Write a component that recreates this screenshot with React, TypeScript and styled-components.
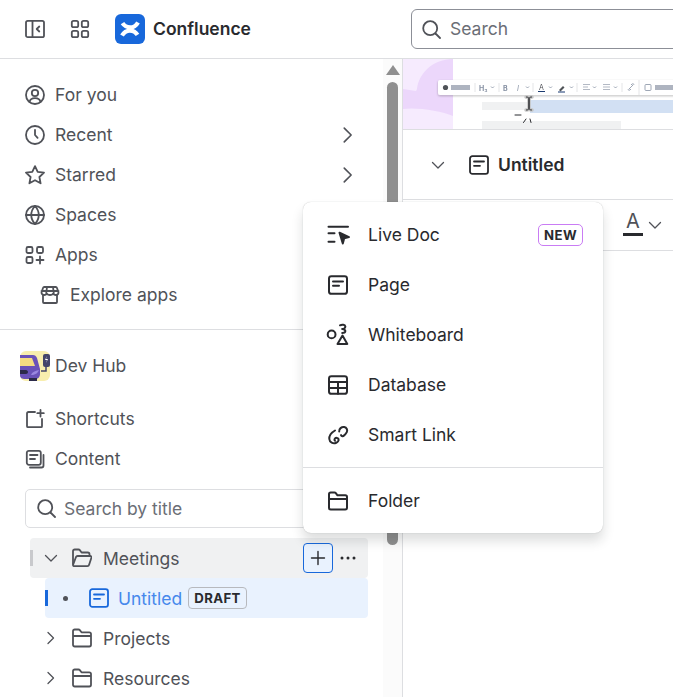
import React from 'react';
import styled, { createGlobalStyle } from 'styled-components';

const GlobalStyle = createGlobalStyle`
  html, body {
    margin: 0;
    padding: 0;
    background: #fff;
    font-family: Inter, "Liberation Sans", sans-serif;
  }
`

const Page = styled.div`
  position: relative;
  width: 673px;
  height: 697px;
  overflow: hidden;
  background: #fff;
`
const TopBar = styled.header`
  display: flex;
  align-items: center;
  height: 58px;
  border-bottom: 1px solid #dddee1;
  padding-left: 25px;
`
const BarIcon = styled.span`
  display: flex;
  width: 20px;
  height: 20px;
  margin-right: 25px;
  color: #505258;
`
const LogoBox = styled.span`
  display: flex;
  width: 30px;
  height: 30px;
  margin-right: 8px;
`
const Brand = styled.span`
  flex: none;
  padding-bottom: 2px;
  font-size: 17.5px;
  font-weight: 600;
  color: #292a2e;
  width: 258px;
`
const SearchBox = styled.div`
  display: flex;
  flex: none;
  align-items: center;
  gap: 9px;
  width: 320px;
  height: 38px;
  padding-left: 10px;
  border: 1px solid #8c8f97;
  border-radius: 6px;
  color: #505258;
  font-size: 17.5px;
  span { color: #6b6e76; padding-bottom: 2px; }
`
const Body = styled.div`
  display: flex;
  height: 638px;
`
const Sidebar = styled.aside`
  display: flex;
  flex: none;
  width: 402px;
  border-right: 1px solid #dddee1;
`
const NavColumn = styled.nav`
  flex: none;
  width: 383px;
  padding-top: 16px;
`
const ScrollTrack = styled.div`
  display: flex;
  flex-direction: column;
  align-items: center;
  width: 19px;
  padding-top: 6px;
  background: #fbfbfb;
`
const ScrollArrow = styled.div`
  width: 0;
  height: 0;
  border-left: 7px solid transparent;
  border-right: 7px solid transparent;
  border-bottom: 10px solid #8f8f8f;
  margin-bottom: 7px;
`
const ScrollThumb = styled.div`
  width: 11px;
  height: 463px;
  border-radius: 6px;
  background: #8f8f8f;
`
const Label = styled.span`
  padding-bottom: 2px;
`
const NavItem = styled.div<{ $indent?: boolean }>`
  display: flex;
  align-items: center;
  gap: 10px;
  height: 40px;
  padding-left: ${(p) => (p.$indent ? '40px' : '25px')};
  padding-right: 25px;
  color: #505258;
  font-size: 17.5px;
  svg { flex: none; width: 20px; height: 20px; }
`
const NavTail = styled.span`
  display: flex;
  margin-left: auto;
`
const NavDivider = styled.div`
  height: 1px;
  margin-top: 14px;
  background: #dddee1;
`
const SpaceRow = styled.div`
  display: flex;
  align-items: center;
  gap: 5px;
  height: 30px;
  margin: 21px 0 18px;
  padding-left: 20px;
  color: #505258;
  font-size: 17.5px;
`
const SpaceIcon = styled.span`
  display: flex;
  width: 30px;
  height: 30px;
`
const TitleSearch = styled.div`
  display: flex;
  align-items: center;
  gap: 8px;
  box-sizing: border-box;
  height: 39px;
  margin: 10px 0 10px 25px;
  padding-left: 11px;
  border: 1px solid #dddee1;
  border-radius: 5px;
  color: #6b6e76;
  font-size: 17.5px;
  svg { color: #505258; }
`
const TreeRow = styled.div<{ $variant?: 'hover' | 'active'; $inset?: boolean }>`
  position: relative;
  display: flex;
  align-items: center;
  height: 40px;
  margin-left: ${(p) => (p.$inset ? '45px' : '30px')};
  margin-right: 15px;
  padding-right: 7px;
  border-radius: 4px;
  color: ${(p) => (p.$variant === 'active' ? '#4688ec' : '#505258')};
  font-size: 17.5px;
  background: ${(p) =>
    p.$variant === 'active' ? '#e9f2fe' : p.$variant === 'hover' ? '#f0f1f2' : 'transparent'};
`
const EdgeMark = styled.span<{ $color: string }>`
  position: absolute;
  left: 0;
  top: 12px;
  width: 3px;
  height: 16px;
  background: ${(p) => p.$color};
`
const Twist = styled.span`
  display: flex;
  justify-content: center;
  width: 16px;
  margin: 0 13px;
  color: #505258;
`
const TreeIcon = styled.span`
  display: flex;
  width: 20px;
  height: 20px;
  margin-right: 11px;
`
const TreeLabel = styled.span`
  padding-top: 1px;
`
const DraftDot = styled.span`
  flex: none;
  width: 5px;
  height: 5px;
  margin: 0 22px 0 18px;
  border-radius: 50%;
  background: #505258;
`
const PageIcon = styled.span`
  display: flex;
  width: 20px;
  height: 20px;
  margin-right: 9px;
  margin-left: -1px;
  color: #1868db;
`
const DraftBadge = styled.span`
  display: flex;
  align-items: center;
  box-sizing: border-box;
  height: 22px;
  margin-left: 6px;
  padding: 0 5px;
  border: 1px solid #b7b9be;
  border-radius: 4px;
  color: #292a2e;
  font-size: 13.2px;
  font-weight: 700;
  letter-spacing: 0.4px;
`
const RowActions = styled.span`
  display: flex;
  align-items: center;
  gap: 2px;
  margin-left: auto;
`
const PlusButton = styled.span`
  display: flex;
  align-items: center;
  justify-content: center;
  box-sizing: border-box;
  width: 30px;
  height: 30px;
  border: 1px solid #1868db;
  border-radius: 4px;
  background: #e9f2fe;
  color: #292a2e;
`
const MoreButton = styled.span`
  display: flex;
  width: 26px;
  justify-content: center;
  color: #292a2e;
`
const Main = styled.main`
  flex: 1;
  min-width: 0;
`
const Banner = styled.div`
  display: flex;
  height: 70px;
  border-bottom: 1px solid #dddee1;
  svg { display: block; }
`
const TitleRow = styled.div`
  display: flex;
  align-items: center;
  height: 69px;
  padding-left: 27px;
  border-bottom: 1px solid #dddee1;
  color: #292a2e;
  font-size: 17.5px;
  font-weight: 600;
`
const TitleChevron = styled.span`
  display: flex;
  width: 16px;
  margin-right: 23px;
  color: #505258;
`
const TitleIcon = styled.span`
  display: flex;
  width: 20px;
  height: 20px;
  margin-right: 9px;
`
const FormatBar = styled.div`
  display: flex;
  align-items: center;
  height: 50px;
  padding-left: 220px;
  border-bottom: 1px solid #dddee1;
  color: #505258;
`
const ColorLetter = styled.span`
  display: block;
  width: 20px;
  margin-right: 4px;
  margin-top: -3px;
  padding-bottom: 1px;
  border-bottom: 3px solid #292a2e;
  font-size: 20px;
  line-height: 21px;
  text-align: center;
`
const Popup = styled.div`
  position: absolute;
  left: 303px;
  top: 202px;
  width: 300px;
  height: 331px;
  padding-top: 8px;
  box-sizing: border-box;
  border-radius: 8px;
  background: #fff;
  box-shadow: 0 8px 12px rgba(30, 31, 33, 0.15), 0 0 1px rgba(30, 31, 33, 0.31);
`
const MenuItem = styled.div`
  display: flex;
  align-items: center;
  gap: 20px;
  height: 50px;
  padding: 0 20px 0 25px;
  color: #292a2e;
  font-size: 17.5px;
  svg { flex: none; width: 20px; height: 20px; overflow: visible; stroke-width: 2; }
`
const NewBadge = styled.span`
  display: flex;
  align-items: center;
  box-sizing: border-box;
  height: 22px;
  margin-left: auto;
  padding: 0 5px;
  border: 1px solid #c97cf4;
  border-radius: 5px;
  font-size: 13.2px;
  font-weight: 700;
  letter-spacing: 0.4px;
`
const MenuDivider = styled.div`
  height: 1px;
  margin: 7px 0 8px;
  background: #dddee1;
`

const Svg: React.FC<{ children: React.ReactNode; size?: number }> = ({ children, size = 20 }) => (
  <svg width={size} height={size} viewBox="0 0 20 20" fill="none" stroke="currentColor" strokeWidth="1.8" strokeLinecap="round" strokeLinejoin="round">
    {children}
  </svg>
)

const Chevron: React.FC<{ down?: boolean }> = ({ down }) => (
  <svg width="16" height="16" viewBox="0 0 16 16" fill="none" stroke="currentColor" strokeWidth="1.3" strokeLinecap="round" strokeLinejoin="round">
    {down ? <path d="M2.500 5.500 8 11l5.500-5.500" /> : <path d="M5 2.500 10.500 8 5 13.500" />}
  </svg>
)

const SearchGlyph = () => (
  <svg width="19" height="19" viewBox="0 0 19 19" fill="none" stroke="currentColor" strokeWidth="1.800" strokeLinecap="round">
    <circle cx="8.200" cy="8.200" r="7" />
    <path d="m13.500 13.500 4.500 4.500" />
  </svg>
)

const PageGlyph = () => (
  <Svg>
    <rect x="1" y="1.200" width="18" height="17.600" rx="2.400" />
    <path d="M5 6.500h10M5 10.800h6" />
  </Svg>
)

const FolderGlyph = () => (
  <Svg>
    <path d="M1 5V3.200c0-1 .7-1.700 1.700-1.700h3.800c.5 0 1 .2 1.300.6L9.500 4.300h7.800c1 0 1.700.7 1.700 1.700v10.800c0 1-.7 1.700-1.700 1.700H2.700c-1 0-1.700-.7-1.700-1.700V5ZM1 8h18" />
  </Svg>
)

const navIcons: Record<string, React.ReactNode> = {
  foryou: (
    <Svg>
      <circle cx="10" cy="10" r="9" />
      <circle cx="10" cy="8" r="3.200" />
      <path d="M4.500 17c.5-2.600 2.200-3.800 5.500-3.800s5 1.200 5.500 3.800" />
    </Svg>
  ),
  recent: (
    <Svg>
      <circle cx="10" cy="10" r="9" />
      <path d="M10 4.800V10l2.600 2.800" />
    </Svg>
  ),
  starred: (
    <Svg>
      <path d="m10 1.100 2.700 5.800 6.300.8-4.600 4.300 1.200 6.300L10 15.200 4.400 18.300l1.200-6.300L1 7.700l6.300-.8L10 1.100Z" />
    </Svg>
  ),
  spaces: (
    <Svg>
      <circle cx="10" cy="10" r="9" />
      <path d="M1 10h18M10 1c-5 5.500-5 12.500 0 18M10 1c5 5.500 5 12.500 0 18" />
    </Svg>
  ),
  apps: (
    <Svg>
      <rect x="1.500" y="2" width="6" height="6" rx="1.500" />
      <rect x="12" y="2" width="6" height="6" rx="1.500" />
      <rect x="1.500" y="12" width="6" height="6" rx="1.500" />
      <path d="M15 11.500v7M11.500 15h7" />
    </Svg>
  ),
  explore: (
    <Svg>
      <path d="M3 10v7c0 .6.400 1 1 1h12c.6 0 1-.4 1-1v-7" />
      <path d="M1.500 7.500 3 3c.2-.6.600-1 1.200-1h11.600c.6 0 1 .4 1.200 1l1.500 4.500c0 1.500-1.200 2.500-2.800 2.500-1.100 0-2-.5-2.700-1.300-.5.800-1.600 1.300-3 1.300s-2.500-.5-3-1.300C6.300 9.500 5.400 10 4.300 10 2.700 10 1.500 9 1.500 7.500ZM7 2l-.8 6.700M13 2l.8 6.700M1.500 6h17" />
    </Svg>
  ),
  shortcuts: (
    <Svg>
      <path d="M10 3H3.500C2.500 3 2 3.600 2 4.500v12.700c0 .6.400 1 1 1h13.200c.5 0 .8-.4.800-1V10" />
      <path d="M15.500 1v6.500M12.300 4.200h6.500" />
    </Svg>
  ),
  content: (
    <Svg>
      <rect x="1.800" y="1.800" width="14" height="14" rx="2" />
      <path d="M5 6h7.500M5 10h5M18.500 6v10.500c0 1-.8 2-2 2H5" />
    </Svg>
  ),
}

const menuIcons: Record<string, React.ReactNode> = {
  live: (
    <Svg>
      <path d="M.5 1.800h19.500M.5 8.300h6M.5 16.700h6" />
      <path d="m11.500 7.700 9.500 4.400-4.800 1.200-1.400 5.200-3.300-10.800Z" fill="currentColor" />
    </Svg>
  ),
  whiteboard: (
    <Svg>
      <circle cx="3.600" cy="9.400" r="3.900" />
      <path d="M12 .3c2-1 5-.7 5.300 1 .3 1.500-1.200 2.500-3.100 2.800 2 .2 3.500 1 3.100 2.500-.3 1.100-1.600 1.500-3.100 1.500" />
      <path d="m14.500 10.600 4.800 8.400H9.500l5-8.400Z" />
    </Svg>
  ),
  database: (
    <Svg>
      <rect x="1" y="1.200" width="18" height="17.600" rx="2.400" />
      <path d="M1 7h18M1 13h18M10 7v11.800" />
    </Svg>
  ),
  link: (
    <Svg>
      <path d="M11.200 6.500c-.5-2.500 2.500-5 5-4.500 2.500.5 3.600 3 2.600 5.100-.7 1.500-2 2.800-3.500 4-1 .3-2-.2-2.300-1" />
      <path d="M7 5.500C3.500 7.500 1 10.500 1.300 14c.3 3.500 4 5 6.500 4 2-.8 3.300-2.500 2.700-4-.6-1.300-2.500-1.500-3.500-.5-.7.700-.7 1.800 0 2.300" />
    </Svg>
  ),
}

const BannerArt = () => (
  <svg width="270" height="70" viewBox="0 0 270 70" fontFamily="Inter, sans-serif">
    <defs>
      <filter id="barShadow" x="-5%" y="-30%" width="110%" height="170%">
        <feDropShadow dx="0" dy="1" stdDeviation="1.200" floodColor="#1e1f21" floodOpacity="0.28" />
      </filter>
      <filter id="blurAll" x="-5%" y="-5%" width="110%" height="110%">
        <feGaussianBlur stdDeviation="0.300" />
      </filter>
    </defs>
    <rect x="0" y="0" width="50" height="70" fill="#f6ebfe" />
    <path d="M0 30 14 30C16 14 30 0 50 0V57C38 52 14 48 0 50Z" fill="#ecd7fb" />
    <path d="M0 30 14 30 13 32 0 30Z" fill="#f6ebfe" />
    <path d="M46 70C47 64 49 60 50 58V70Z" fill="#f6ebfe" />
    <rect x="79" y="43" width="63" height="8" fill="#f0f1f2" />
    <rect x="127" y="41" width="143" height="13" fill="#d2e0f3" />
    <rect x="79" y="62" width="139" height="8" fill="#f0f1f2" />
    <g filter="url(#barShadow)">
      <rect x="35" y="21" width="240" height="15" rx="2" fill="#fff" />
    </g>
    <g filter="url(#blurAll)">
      <circle cx="42.500" cy="28.500" r="2.600" fill="#505258" />
      <rect x="48" y="26" width="19" height="5" fill="#aeb4c0" />
      <rect x="252" y="26" width="18" height="5" fill="#aeb4c0" />
      <g fill="#8590a2" fontSize="7" fontWeight="700">
        <text x="76" y="31.500">H₃</text>
        <text x="100" y="31.500">B</text>
        <text x="114" y="31.500" fontStyle="italic" fontWeight="400">I</text>
      </g>
      <text x="136" y="31" fontSize="7" fill="#505258">A</text>
      <rect x="135" y="32" width="7" height="1" fill="#1d3a70" />
      <path d="m156 31 4-4 1.500 1.500-4 4Z" fill="#505258" />
      <rect x="155" y="32.500" width="7" height="1" fill="#1d3a70" />
      <g stroke="#b3b9c4" strokeWidth="1">
        <path d="M180 25.500h7M180 28h5M180 30.500h7M200 25.500h7M200 28h7M200 30.500h7" />
      </g>
      <g fill="none" stroke="#8590a2" strokeWidth="0.800">
        <path d="m88 27.500 1.500 1.500 1.500-1.500M123 27.500l1.500 1.500 1.500-1.500M146 27.500l1.500 1.500 1.500-1.500M167 27.500l1.500 1.500 1.500-1.500M190 27.500l1.500 1.500 1.500-1.500M211 27.500l1.500 1.500 1.500-1.500" />
        <path d="m226 30 4-4M225 30c0 1 1 1.500 2 1l1-1M231 26c0-1-1-1.500-2-1l-1 1" />
        <rect x="242" y="25.500" width="6" height="6" rx="1" />
      </g>
      <g stroke="#dddee1" strokeWidth="0.800">
        <path d="M72 24v9M96 24v9M130 24v9M174 24v9M219 24v9M236 21v15" />
      </g>
    </g>
    <g fill="none" strokeLinecap="round">
      <path d="M123 38c2 0 3 1 3 2v9c0 1-1 2-3 2M129 38c-2 0-3 1-3 2v9c0 1 1 2 3 2" stroke="#c4c4c4" strokeWidth="3.500" />
      <path d="M123.500 38c2 0 2.500 1 2.500 2v9c0 1-.5 2-2.500 2M128.500 38c-2 0-2.500 1-2.500 2v9c0 1 .5 2 2.500 2" stroke="#292a2e" strokeWidth="1" />
      <path d="M112 56h6M123 60l-2.500 3.500M127 60l1 3.500" stroke="#292a2e" strokeWidth="1" />
    </g>
  </svg>
)

const navItems = [
  { key: 'foryou', label: 'For you' },
  { key: 'recent', label: 'Recent', arrow: true },
  { key: 'starred', label: 'Starred', arrow: true },
  { key: 'spaces', label: 'Spaces' },
  { key: 'apps', label: 'Apps' },
]

const App: React.FC = () => {
  return (
    <Page>
      <GlobalStyle />
      <TopBar>
        <BarIcon>
          <Svg>
            <rect x="1" y="1.800" width="18" height="16.400" rx="1.800" />
            <path d="M7.500 2v16" />
            <path d="m14.300 7.500-2.600 2.500 2.600 2.500" />
          </Svg>
        </BarIcon>
        <BarIcon>
          <Svg>
            <rect x="1.800" y="1.800" width="6.400" height="6.400" rx="1.800" />
            <rect x="11.800" y="1.800" width="6.400" height="6.400" rx="1.800" />
            <rect x="1.800" y="11.800" width="6.400" height="6.400" rx="1.800" />
            <rect x="11.800" y="11.800" width="6.400" height="6.400" rx="1.800" />
          </Svg>
        </BarIcon>
        <LogoBox>
          <svg width="30" height="30" viewBox="0 0 30 30">
            <rect width="30" height="30" rx="6" fill="#1868db" />
            <g fill="none" stroke="#fff" strokeWidth="4.200">
              <path d="M7.500 9.200C11 14.500 19 15.500 23 8.500" />
              <path d="M7 21.500C11 14.500 19 15.500 22.500 20.800" />
            </g>
          </svg>
        </LogoBox>
        <Brand>Confluence</Brand>
        <SearchBox>
          <SearchGlyph />
          <span>Search</span>
        </SearchBox>
      </TopBar>
      <Body>
        <Sidebar>
          <NavColumn>
            {navItems.map((item) => (
              <NavItem key={item.key}>
                {navIcons[item.key]}
                <Label>{item.label}</Label>
                {item.arrow && (
                  <NavTail>
                    <Chevron />
                  </NavTail>
                )}
              </NavItem>
            ))}
            <NavItem $indent>
              {navIcons.explore}
              <Label>Explore apps</Label>
            </NavItem>
            <NavDivider />
            <SpaceRow>
              <SpaceIcon>
                <svg width="30" height="30" viewBox="0 0 30 30">
                  <rect width="30" height="30" rx="6" fill="#f8eeae" />
                  <path d="M0 4h13c2 0 3 1 4 3l3 11v5c0 3-2 5-5 5H5c-3 0-5-1-5-4Z" fill="#6a52b8" />
                  <path d="M0 7h12l3 8H0Z" fill="#f5dc82" />
                  <path d="M0 19h6c1 0 2 1 2 2s-1 2-2 2H0Z" fill="#2c2a4a" />
                  <path d="M11 24c1-3 4-4 8-5-1 3-4 5-8 5Z" fill="#9a87e0" />
                  <rect x="9" y="27" width="8" height="3" fill="#2c2a4a" />
                  <rect x="23" y="3" width="7" height="13" rx="2" fill="#44456b" />
                  <path d="m27 5-2 4h2l-1 3 2-4h-2Z" fill="#fff" />
                  <path d="M26 16v4h-5" fill="none" stroke="#44456b" strokeWidth="1.500" />
                </svg>
              </SpaceIcon>
              <Label>Dev Hub</Label>
            </SpaceRow>
            <NavItem>
              {navIcons.shortcuts}
              <Label>Shortcuts</Label>
            </NavItem>
            <NavItem>
              {navIcons.content}
              <Label>Content</Label>
            </NavItem>
            <TitleSearch>
              <SearchGlyph />
              Search by title
            </TitleSearch>
            <TreeRow $variant="hover">
              <EdgeMark $color="#c8c9cc" />
              <Twist>
                <Chevron down />
              </Twist>
              <TreeIcon>
                <Svg>
                  <path d="M1 16V3.200c0-1 .7-1.700 1.700-1.700h3.800c.5 0 1 .2 1.300.6l1.800 2.400h6.200c1 0 1.700.7 1.700 1.700V8" />
                  <path d="M1 17l2.900-7.800c.3-.7.900-1.200 1.600-1.200h12.600c1 0 1.600.9 1.300 1.800l-2.300 7c-.2.800-.9 1.400-1.700 1.400H2.700C1.700 18.200 1 17.800 1 17Z" />
                </Svg>
              </TreeIcon>
              <TreeLabel>Meetings</TreeLabel>
              <RowActions>
                <PlusButton>
                  <svg width="16" height="16" viewBox="0 0 16 16" fill="none" stroke="currentColor" strokeWidth="1.400" strokeLinecap="round">
                    <path d="M8 1.500v13M1.500 8h13" />
                  </svg>
                </PlusButton>
                <MoreButton>
                  <svg width="16" height="4" viewBox="0 0 16 4" fill="currentColor">
                    <circle cx="2" cy="2" r="1.500" />
                    <circle cx="8" cy="2" r="1.500" />
                    <circle cx="14" cy="2" r="1.500" />
                  </svg>
                </MoreButton>
              </RowActions>
            </TreeRow>
            <TreeRow $variant="active" $inset>
              <EdgeMark $color="#1868db" />
              <DraftDot />
              <PageIcon>
                <PageGlyph />
              </PageIcon>
              <TreeLabel>Untitled</TreeLabel>
              <DraftBadge>DRAFT</DraftBadge>
            </TreeRow>
            <TreeRow>
              <Twist>
                <Chevron />
              </Twist>
              <TreeIcon>
                <FolderGlyph />
              </TreeIcon>
              <TreeLabel>Projects</TreeLabel>
            </TreeRow>
            <TreeRow>
              <Twist>
                <Chevron />
              </Twist>
              <TreeIcon>
                <FolderGlyph />
              </TreeIcon>
              <TreeLabel>Resources</TreeLabel>
            </TreeRow>
          </NavColumn>
          <ScrollTrack>
            <ScrollArrow />
            <ScrollThumb />
          </ScrollTrack>
        </Sidebar>
        <Main>
          <Banner>
            <BannerArt />
          </Banner>
          <TitleRow>
            <TitleChevron>
              <Chevron down />
            </TitleChevron>
            <TitleIcon>
              <PageGlyph />
            </TitleIcon>
            Untitled
          </TitleRow>
          <FormatBar>
            <ColorLetter>A</ColorLetter>
            <Chevron down />
          </FormatBar>
        </Main>
      </Body>
      <Popup>
        <MenuItem>
          {menuIcons.live}
          <Label>Live Doc</Label>
          <NewBadge>NEW</NewBadge>
        </MenuItem>
        <MenuItem>
          <PageGlyph />
          <Label>Page</Label>
        </MenuItem>
        <MenuItem>
          {menuIcons.whiteboard}
          <Label>Whiteboard</Label>
        </MenuItem>
        <MenuItem>
          {menuIcons.database}
          <Label>Database</Label>
        </MenuItem>
        <MenuItem>
          {menuIcons.link}
          <Label>Smart Link</Label>
        </MenuItem>
        <MenuDivider />
        <MenuItem>
          <FolderGlyph />
          <Label>Folder</Label>
        </MenuItem>
      </Popup>
    </Page>
  )
}

export default App;
